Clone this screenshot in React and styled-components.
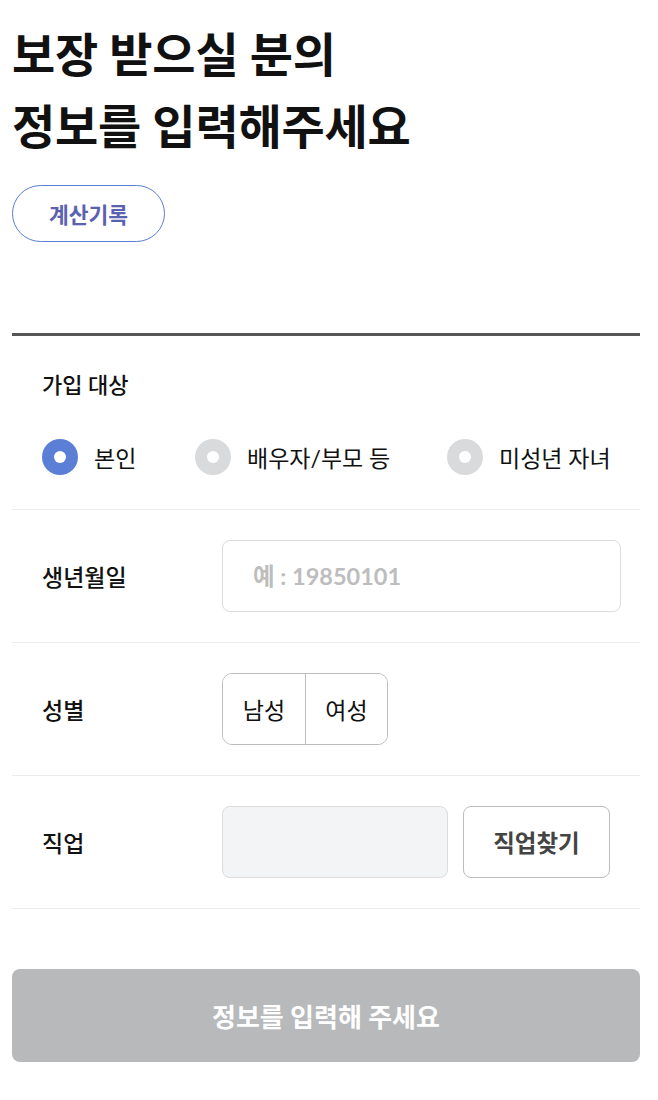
import React, { useState } from "react";
import styled, { createGlobalStyle } from "styled-components";

const Global = createGlobalStyle`
  html, body { margin: 0; padding: 0; background: #fff; }
  body { font-family: Lato, "Noto Sans CJK KR", sans-serif; color: #111; }
  * { box-sizing: border-box; }
`;

const Page = styled.div`
  width: 628px;
  margin-left: 12px;
  padding-top: 18px;
`;

const Title = styled.h1`
  margin: 0;
  font-size: 47px;
  font-weight: 700;
  line-height: 72px;
  letter-spacing: -0.2px;
  color: #111;
`;

const HistoryButton = styled.button`
  margin-top: 23px;
  width: 153px;
  height: 57px;
  border: 1px solid #5b7fd6;
  border-radius: 29px;
  background: #fff;
  color: #5a62b0;
  font-family: inherit;
  font-size: 21.5px;
  font-weight: 700;
  cursor: pointer;
`;

const Form = styled.div`
  margin-top: 91px;
  border-top: 3px solid #555;
`;

const Section = styled.div`
  padding: 31px 30px 0;
  height: 174px;
  border-bottom: 1px solid #ebebeb;
`;

const SectionLabel = styled.div`
  font-size: 22px;
  font-weight: 500;
  line-height: 36px;
`;

const RadioRow = styled.div`
  display: flex;
  margin-top: 36px;
`;

const RadioItem = styled.label`
  display: flex;
  flex-shrink: 0;
  align-items: center;
  gap: 16px;
  width: ${(p) => (p.w ? `${p.w}px` : "auto")};
  white-space: nowrap;
  font-size: 23px;
  cursor: pointer;
`;

const Dot = styled.span`
  flex-shrink: 0;
  width: 36px;
  height: 36px;
  border-radius: 50%;
  background: ${(p) => (p.on ? "#5b7fd6" : "#d9dadc")};
  display: flex;
  align-items: center;
  justify-content: center;
  &::after {
    content: "";
    width: 12px;
    height: 12px;
    border-radius: 50%;
    background: #fff;
  }
`;

const Row = styled.div`
  display: flex;
  align-items: center;
  height: 133px;
  padding-left: 30px;
  border-bottom: 1px solid #ebebeb;
`;

const RowLabel = styled.div`
  width: 180px;
  font-size: 23px;
  font-weight: 500;
`;

const TextInput = styled.input`
  width: 399px;
  height: 72px;
  border: 1px solid #dcdcdc;
  border-radius: 8px;
  padding: 0 30px;
  font-family: inherit;
  font-size: 23.5px;
  font-weight: 700;
  color: #111;
  outline: none;
  &::placeholder { color: #bdbdbd; }
`;

const Segment = styled.div`
  display: flex;
  height: 72px;
  border: 1px solid #bcbcbc;
  border-radius: 10px;
  overflow: hidden;
`;

const SegButton = styled.button`
  width: 82px;
  border: none;
  border-left: ${(p) => (p.first ? "none" : "1px solid #bcbcbc")};
  background: #fff;
  font-family: inherit;
  font-size: 23px;
  color: #111;
  cursor: pointer;
`;

const JobBox = styled.div`
  width: 226px;
  height: 72px;
  background: #f3f4f6;
  border: 1px solid #dcdcdc;
  border-radius: 8px;
`;

const JobButton = styled.button`
  margin-left: 15px;
  width: 147px;
  height: 72px;
  border: 1px solid #bcbcbc;
  border-radius: 8px;
  background: #fff;
  font-family: inherit;
  font-size: 23.5px;
  font-weight: 700;
  color: #444;
  cursor: pointer;
`;

const Submit = styled.button`
  margin-top: 60px;
  width: 100%;
  height: 93px;
  border: none;
  border-radius: 8px;
  background: #b8b9bb;
  color: #fff;
  font-family: inherit;
  font-size: 26px;
  font-weight: 700;
`;

export default function App() {
  const [target, setTarget] = useState(0);
  const opts = [
    { t: "본인", w: 153 },
    { t: "배우자/부모 등", w: 252 },
    { t: "미성년 자녀" },
  ];
  return (
    <>
      <Global />
      <Page>
        <Title>
          보장 받으실 분의
          <br />
          정보를 입력해주세요
        </Title>
        <HistoryButton>계산기록</HistoryButton>
        <Form>
          <Section>
            <SectionLabel>가입 대상</SectionLabel>
            <RadioRow>
              {opts.map((o, i) => (
                <RadioItem key={o.t} w={o.w} onClick={() => setTarget(i)}>
                  <Dot on={target === i} />
                  {o.t}
                </RadioItem>
              ))}
            </RadioRow>
          </Section>
          <Row>
            <RowLabel>생년월일</RowLabel>
            <TextInput placeholder="예 : 19850101" />
          </Row>
          <Row>
            <RowLabel>성별</RowLabel>
            <Segment>
              <SegButton first>남성</SegButton>
              <SegButton>여성</SegButton>
            </Segment>
          </Row>
          <Row>
            <RowLabel>직업</RowLabel>
            <JobBox />
            <JobButton>직업찾기</JobButton>
          </Row>
        </Form>
        <Submit>정보를 입력해 주세요</Submit>
      </Page>
    </>
  );
}
